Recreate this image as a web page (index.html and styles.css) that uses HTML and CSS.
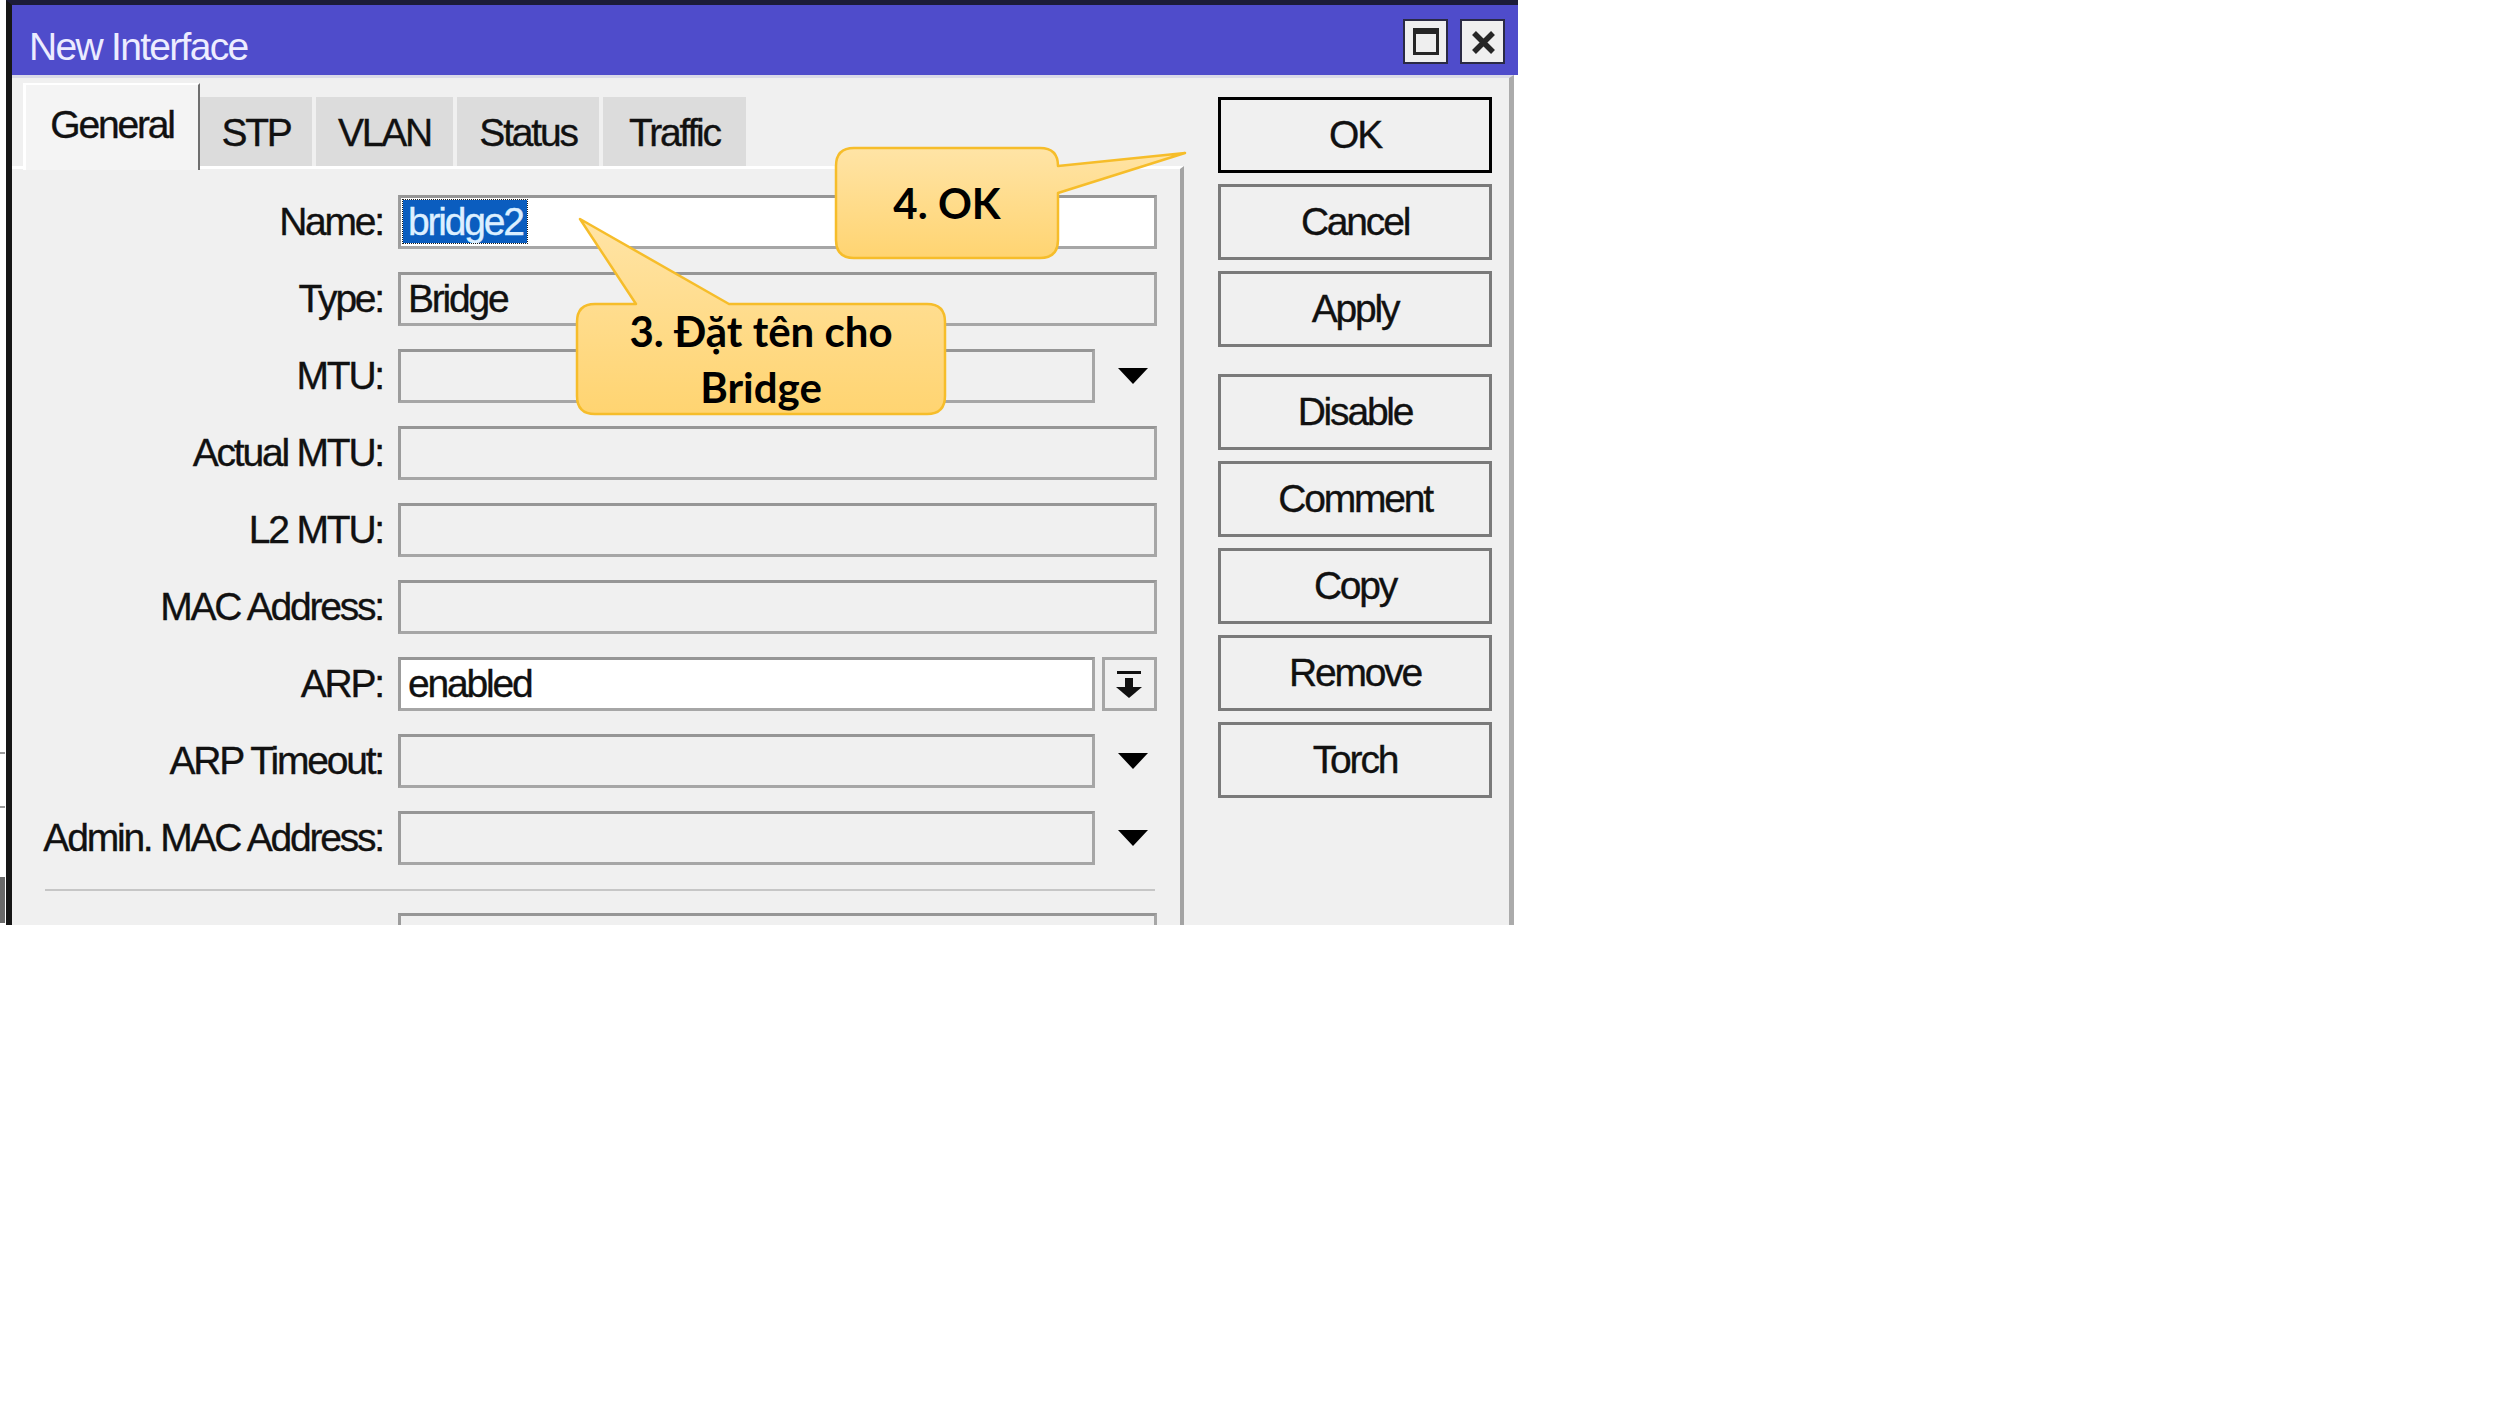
FILE: index.html
```html
<!DOCTYPE html>
<html>
<head>
<meta charset="utf-8">
<title>New Interface</title>
<link rel="stylesheet" href="styles.css">
</head>
<body>
<div class="window">
  <div class="titlebar">
    <span class="title">New Interface</span>
    <div class="tb-btns">
      <div class="tb-btn">
        <svg width="41" height="41" viewBox="0 0 41 41">
          <rect x="9.5" y="8.5" width="23" height="24" fill="none" stroke="#262626" stroke-width="3"/>
          <rect x="8" y="7" width="26" height="6" fill="#262626"/>
        </svg>
      </div>
      <div class="tb-btn">
        <svg width="41" height="41" viewBox="0 0 41 41">
          <path d="M12 12 L31 31 M31 12 L12 31" stroke="#262626" stroke-width="5.5" fill="none"/>
        </svg>
      </div>
    </div>
  </div>
  <div class="body">
    <div class="main">
      <div class="tabs">
        <div class="tab active">General</div>
        <div class="tab w-stp">STP</div>
        <div class="tab w-vlan">VLAN</div>
        <div class="tab w-status">Status</div>
        <div class="tab w-traffic">Traffic</div>
      </div>
      <div class="panel">
        <div class="row"><span class="lbl">Name:</span><div class="field white nopad"><span class="sel">bridge2</span></div></div>
        <div class="row"><span class="lbl">Type:</span><div class="field">Bridge</div></div>
        <div class="row"><span class="lbl">MTU:</span><div class="field short"></div><span class="tri"></span></div>
        <div class="row"><span class="lbl">Actual MTU:</span><div class="field"></div></div>
        <div class="row"><span class="lbl">L2 MTU:</span><div class="field"></div></div>
        <div class="row"><span class="lbl">MAC Address:</span><div class="field"></div></div>
        <div class="row"><span class="lbl">ARP:</span><div class="field short white">enabled</div>
          <div class="ddbtn">
            <svg width="49" height="48" viewBox="0 0 49 48">
              <rect x="12" y="11" width="24" height="3" fill="#111"/>
              <rect x="20" y="18" width="8" height="10" fill="#111"/>
              <polygon points="11,27 37,27 24,38" fill="#111"/>
            </svg>
          </div>
        </div>
        <div class="row"><span class="lbl">ARP Timeout:</span><div class="field short"></div><span class="tri"></span></div>
        <div class="row"><span class="lbl">Admin. MAC Address:</span><div class="field short"></div><span class="tri"></span></div>
        <div class="sep"></div>
        <div class="row"><span class="lbl"></span><div class="field"></div></div>
      </div>
    </div>
    <div class="actions">
      <div class="btn ok">OK</div>
      <div class="btn">Cancel</div>
      <div class="btn">Apply</div>
      <div class="btn gap">Disable</div>
      <div class="btn">Comment</div>
      <div class="btn">Copy</div>
      <div class="btn">Remove</div>
      <div class="btn">Torch</div>
    </div>
  </div>
</div>

<div class="edge-mark m1"></div>
<div class="edge-mark m2"></div>
<div class="edge-mark m3"></div>

<svg class="callouts" width="1250" height="450" viewBox="0 0 1250 450">
  <defs>
    <linearGradient id="cg" x1="0" y1="0" x2="0" y2="1">
      <stop offset="0" stop-color="#ffe4a6"/>
      <stop offset="1" stop-color="#ffd471"/>
    </linearGradient>
  </defs>
  <path d="M854 148 H1040 Q1058 148 1058 166 L1185 153 L1058 193 L1058 240 Q1058 258 1040 258 L854 258 Q836 258 836 240 L836 166 Q836 148 854 148 Z"
        fill="url(#cg)" stroke="#f6bd2a" stroke-width="2.5" stroke-linejoin="round"/>
  <path d="M595 304 L636 304 L580 219 L729 304 L927 304 Q945 304 945 322 L945 396 Q945 414 927 414 L595 414 Q577 414 577 396 L577 322 Q577 304 595 304 Z"
        fill="url(#cg)" stroke="#f6bd2a" stroke-width="2.5" stroke-linejoin="round"/>
</svg>
<div class="callout-text c4">4. OK</div>
<div class="callout-text c3">3. Đặt tên cho<br>Bridge</div>
</body>
</html>
```

FILE: styles.css
```css
* { box-sizing: border-box; }

body {
  margin: 0;
  background: #ffffff;
  font-family: "Liberation Sans", Arial, sans-serif;
}

.window {
  margin-left: 6px;
  width: 1512px;
  height: 925px;
  border-left: 6px solid #161616;
  border-top: 5px solid #1c1c38;
  background: #ffffff;
  overflow: hidden;
  display: flex;
  flex-direction: column;
}

.titlebar {
  height: 70px;
  flex: none;
  background: #4f4ccb;
  display: flex;
  align-items: flex-start;
  padding: 0 13px 0 17px;
}

.title {
  margin-top: 20px;
  font-size: 39px;
  line-height: 44px;
  letter-spacing: -1.7px;
  color: #ececff;
}

.tb-btns {
  margin-left: auto;
  margin-top: 14px;
  display: flex;
  gap: 12px;
}

.tb-btn {
  width: 45px;
  height: 45px;
  border: 2px solid #2a2a44;
  background: #efefef;
}

.tb-btn svg { display: block; }

.body {
  flex: 1;
  display: flex;
  margin-right: 4px;
  background: #f0f0f0;
  border-top: 3px solid #dadae8;
  border-right: 5px solid #ababab;
}

.main {
  width: 1172px;
  flex: none;
  display: flex;
  flex-direction: column;
}

.tabs {
  height: 88px;
  flex: none;
  display: flex;
  align-items: flex-end;
  gap: 4px;
  padding: 5px 0 0 11px;
}

.tab {
  height: 69px;
  background: #dcdcdc;
  padding-top: 14px;
  font-size: 39px;
  line-height: 44px;
  letter-spacing: -2.2px;
  color: #111;
  text-align: center;
  -webkit-text-stroke: 0.35px #111;
}

.tab.active {
  width: 177px;
  height: 87px;
  margin-bottom: -4px;
  margin-right: -4px;
  position: relative;
  z-index: 1;
  background: #f4f4f4;
  border-left: 3px solid #ffffff;
  border-top: 2px solid #ffffff;
  border-right: 2px solid #6e6e6e;
  padding-top: 18px;
}

.w-stp { width: 112px; }
.w-vlan { width: 137px; }
.w-status { width: 142px; }
.w-traffic { width: 143px; }

.panel {
  flex: 1;
  border-top: 3px solid #ffffff;
  border-right: 4px solid #a3a3a3;
  padding-top: 26px;
  display: flex;
  flex-direction: column;
  gap: 23px;
}

.row {
  flex: none;
  height: 54px;
  display: grid;
  grid-template-columns: 386px 697px 7px 55px;
  align-items: center;
}

.lbl {
  text-align: right;
  padding-right: 15px;
  font-size: 39px;
  line-height: 44px;
  letter-spacing: -2.2px;
  color: #111;
  white-space: nowrap;
  -webkit-text-stroke: 0.35px #111;
}

.field {
  grid-column: 2 / 5;
  height: 54px;
  border: 3px solid #a6a6a6;
  border-top-color: #969696;
  border-left-color: #9c9c9c;
  background: #f0f0f0;
  padding-left: 7px;
  font-size: 39px;
  line-height: 48px;
  letter-spacing: -2.2px;
  color: #111;
  white-space: nowrap;
  overflow: hidden;
  -webkit-text-stroke: 0.35px #111;
}

.field.short { grid-column: 2 / 3; }
.field.white { background: #ffffff; }
.field.nopad { padding-left: 0; }

.sel {
  display: inline-block;
  vertical-align: top;
  margin: 2px 0 0 2px;
  height: 43px;
  line-height: 43px;
  padding: 0 4px 0 5px;
  background: #0b5dbf;
  color: #dcefff;
  -webkit-text-stroke: 0.35px #dcefff;
  outline: 1px dotted #1a1a1a;
}

.tri {
  grid-column: 3 / 5;
  justify-self: end;
  margin-right: 9px;
  width: 0;
  height: 0;
  border-left: 15.5px solid transparent;
  border-right: 15.5px solid transparent;
  border-top: 16px solid #000000;
}

.ddbtn {
  grid-column: 4 / 5;
  height: 54px;
  border: 3px solid #a6a6a6;
  background: #f0f0f0;
}

.ddbtn svg { display: block; }

.sep {
  flex: none;
  width: 1110px;
  height: 2px;
  margin: 1px 0 -1px 33px;
  background: #c6c6c6;
}

.actions {
  flex: 1;
  padding: 19px 0 0 34px;
  display: flex;
  flex-direction: column;
  gap: 11px;
}

.btn {
  width: 274px;
  height: 76px;
  flex: none;
  border: 3px solid #7a7a7a;
  background: #f0f0f0;
  display: flex;
  align-items: center;
  justify-content: center;
  font-size: 39px;
  letter-spacing: -2.2px;
  color: #111;
  -webkit-text-stroke: 0.35px #111;
}

.btn.ok { border-color: #000000; }
.btn.gap { margin-top: 16px; }

.edge-mark {
  position: absolute;
  left: 0;
  width: 5px;
  background: #9a9a9a;
}

.m1 { top: 752px; height: 2px; }
.m2 { top: 806px; height: 2px; }
.m3 { top: 877px; height: 46px; background: #6a6a6a; }

.callouts {
  position: absolute;
  left: 0;
  top: 0;
  overflow: visible;
}

.callout-text {
  position: absolute;
  display: flex;
  align-items: center;
  justify-content: center;
  text-align: center;
  font-family: Lato, "Noto Sans", sans-serif;
  font-weight: 700;
  font-size: 42px;
  line-height: 56px;
  color: #000000;
}

.c4 {
  left: 836px;
  top: 148px;
  width: 222px;
  height: 110px;
}

.c3 {
  left: 577px;
  top: 304px;
  width: 368px;
  height: 110px;
}
```
